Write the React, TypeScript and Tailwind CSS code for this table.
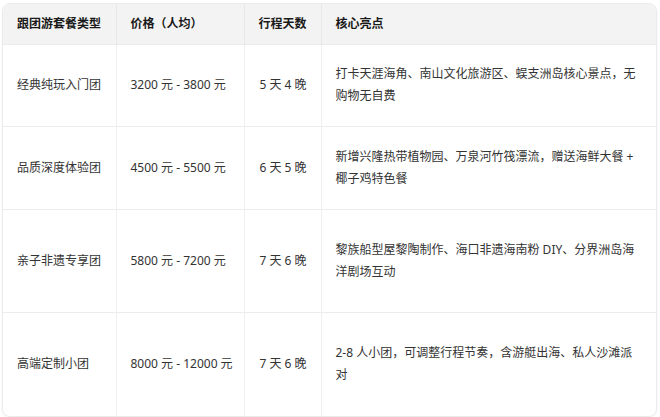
import React from "react";

const rows = [
  { h: "h-[82px]", a: "经典纯玩入门团", b: "3200 元 - 3800 元", c: "5 天 4 晚", d: "打卡天涯海角、南山文化旅游区、蜈支洲岛核心景点，无购物无自费" },
  { h: "h-[83px]", a: "品质深度体验团", b: "4500 元 - 5500 元", c: "6 天 5 晚", d: "新增兴隆热带植物园、万泉河竹筏漂流，赠送海鲜大餐 + 椰子鸡特色餐" },
  { h: "h-[103px]", a: "亲子非遗专享团", b: "5800 元 - 7200 元", c: "7 天 6 晚", d: "黎族船型屋黎陶制作、海口非遗海南粉 DIY、分界洲岛海洋剧场互动" },
  { h: "h-[104px]", a: "高端定制小团", b: "8000 元 - 12000 元", c: "7 天 6 晚", d: "2-8 人小团，可调整行程节奏，含游艇出海、私人沙滩派对" },
];

export default function App() {
  return (
    <div className="w-[660px] h-[417px] bg-white pt-[3px] pl-[2px]" style={{ fontFamily: '"Noto Sans", "Noto Sans CJK SC", sans-serif' }}>
      <div className="w-[655px] rounded-lg border border-[#ebebeb] overflow-hidden shadow-[0_1px_2px_rgba(0,0,0,0.06)]">
        <table className="w-full table-fixed border-collapse text-[12px] text-[#333]">
          <colgroup>
            <col className="w-[113px]" />
            <col className="w-[128px]" />
            <col className="w-[77px]" />
            <col />
          </colgroup>
          <thead>
            <tr className="h-[40px] bg-[#f3f3f3] text-[#1a1a1a] font-bold text-left">
              <th className="px-[14px] border-r border-[#e8e8e8] font-bold">跟团游套餐类型</th>
              <th className="px-[14px] border-r border-[#e8e8e8] font-bold">价格（人均）</th>
              <th className="px-[14px] border-r border-[#e8e8e8] font-bold">行程天数</th>
              <th className="px-[14px] font-bold">核心亮点</th>
            </tr>
          </thead>
          <tbody>
            {rows.map((r, i) => (
              <tr key={i} className={`${r.h} border-t border-[#ececec] leading-[22px]`}>
                <td className="px-[14px] border-r border-[#efefef] align-middle">{r.a}</td>
                <td className="px-[14px] border-r border-[#efefef] align-middle whitespace-nowrap">{r.b}</td>
                <td className="pl-[15px] pr-[8px] border-r border-[#efefef] align-middle whitespace-nowrap">{r.c}</td>
                <td className="pl-[14px] pr-[16px] align-middle">{r.d}</td>
              </tr>
            ))}
          </tbody>
        </table>
      </div>
    </div>
  );
}
